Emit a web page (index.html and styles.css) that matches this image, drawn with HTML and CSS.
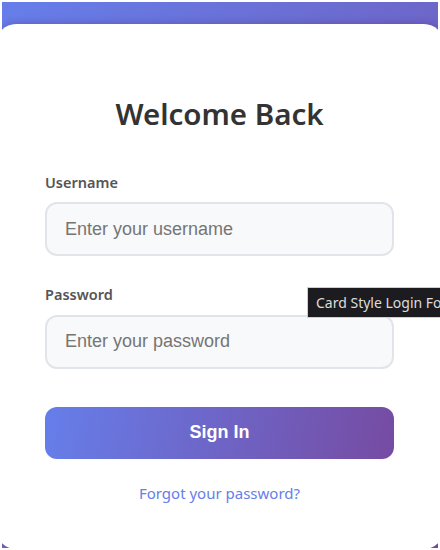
FILE: index.html
```html
<!DOCTYPE html>
<html lang="en">
<head>
<meta charset="utf-8">
<title>Card Style Login Form</title>
<link rel="stylesheet" href="styles.css">
</head>
<body>
<div class="frame">
  <div class="card">
    <h2 class="title">Welcome Back</h2>
    <form class="form">
      <div class="group">
        <label class="label" for="username">Username</label>
        <input class="input" id="username" type="text" placeholder="Enter your username">
      </div>
      <div class="group">
        <label class="label" for="password">Password</label>
        <input class="input" id="password" type="password" placeholder="Enter your password">
      </div>
      <button class="btn" type="button">Sign In</button>
    </form>
    <div class="forgot"><a href="#" class="link">Forgot your password?</a></div>
  </div>
</div>
<div class="tooltip">Card Style Login Form</div>
</body>
</html>
```

FILE: styles.css
```css
html, body {
  margin: 0;
  padding: 0;
  width: 440px;
  height: 550px;
  overflow: hidden;
  background: #ffffff;
}
body {
  position: relative;
  padding: 2px;
  box-sizing: border-box;
  font-family: "Noto Sans", "Open Sans", sans-serif;
}
.frame {
  width: 436px;
  height: 546px;
  overflow: hidden;
  background: linear-gradient(135deg, #667eea 0%, #764ba2 100%);
  padding-top: 22px;
  box-sizing: border-box;
}
.card {
  margin: 0 -6px;
  height: 525px;
  background: #ffffff;
  border-radius: 20px;
  padding: 72px 50px 0 49px;
  box-sizing: border-box;
  box-shadow: 0 -2px 6px rgba(70, 40, 120, 0.25);
}
.title {
  margin: 0 0 40px;
  text-align: center;
  font-size: 29.5px;
  line-height: 36px;
  font-weight: 600;
  color: #333333;
}
.form {
  margin: 0;
}
.group {
  margin-bottom: 28px;
}
.label {
  display: block;
  margin-bottom: 10px;
  font-size: 14.5px;
  line-height: 20.4px;
  font-weight: 600;
  color: #555555;
}
.input {
  display: block;
  width: 100%;
  box-sizing: border-box;
  height: 54px;
  padding: 0 18px;
  border: 2px solid #e1e5e9;
  border-radius: 12px;
  background: #f8f9fa;
  font-family: "Liberation Sans", Arial, sans-serif;
  font-size: 18px;
  color: #333;
  outline: none;
}
.input::placeholder {
  color: #757575;
}
.btn {
  display: block;
  width: 100%;
  height: 52px;
  margin-top: 38px;
  border: none;
  border-radius: 12px;
  background: linear-gradient(100deg, #667eea 0%, #764ba2 100%);
  color: #ffffff;
  font-family: "Liberation Sans", Arial, sans-serif;
  font-size: 18px;
  font-weight: 700;
  cursor: pointer;
}
.forgot {
  margin-top: 24px;
  text-align: center;
  font-size: 15px;
  line-height: 20.4px;
}
.link {
  color: #667eea;
  text-decoration: none;
}
.tooltip {
  position: absolute;
  left: 307px;
  top: 287px;
  height: 31px;
  box-sizing: border-box;
  padding: 0 8px;
  background: #1c1c20;
  border: 1px solid #cfcfcf;
  border-right: none;
  color: #dddddd;
  font-size: 14px;
  line-height: 29px;
  white-space: nowrap;
}
```
